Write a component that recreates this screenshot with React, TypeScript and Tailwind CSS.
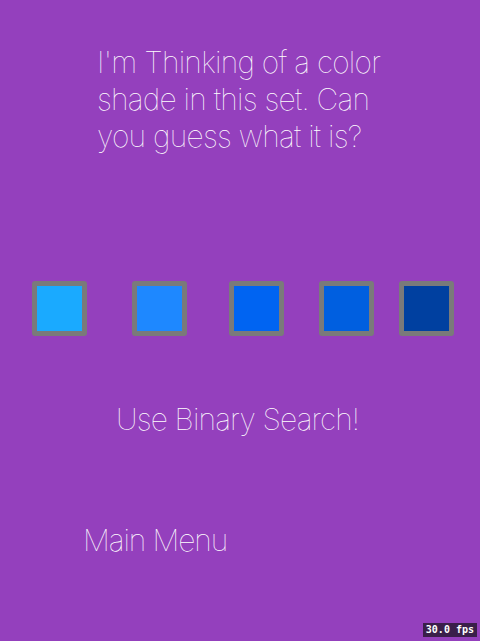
const shades = ["#1aaaff", "#1e88ff", "#0064f2", "#005fe0", "#0040a0"];

export default function App() {
  return (
    <div
      className="relative w-[480px] h-[641px] bg-[#9440bd] text-white overflow-hidden"
      style={{ fontFamily: "Inter, 'Helvetica Neue', sans-serif" }}
    >
      {/* Prompt */}
      <p className="pt-[44px] pl-[97px] text-[30px] leading-[37px] font-thin tracking-[-0.75px]">
        I'm Thinking of a color
        <br />
        shade in this set. Can
        <br />
        you guess what it is?
      </p>

      {/* Shades */}
      <div className="mt-[126px] flex pl-[32px]">
        {shades.map((c, i) => (
          <div
            key={c}
            className={
              "w-[55px] h-[55px] rounded-[3px] border-[5px] border-[#7a7a7a] " +
              (i === 0 ? "" : i === 1 ? "ml-[45px]" : i === 2 ? "ml-[42px]" : i === 3 ? "ml-[35px]" : "ml-[25px]")
            }
            style={{ backgroundColor: c }}
          />
        ))}
      </div>

      <p className="mt-[65px] pl-[116px] text-[30px] leading-[37px] font-thin tracking-[-0.85px]">
        Use Binary Search!
      </p>

      <p className="mt-[84px] pl-[83px] text-[30px] leading-[37px] font-thin tracking-[-1.1px]">
        Main Menu
      </p>

      <span
        className="absolute right-[3px] bottom-[4px] bg-[#3a1f4a] px-[3px] text-[10px] leading-[14px] font-bold"
        style={{ fontFamily: "'DejaVu Sans Mono', monospace" }}
      >
        30.0 fps
      </span>
    </div>
  );
}
